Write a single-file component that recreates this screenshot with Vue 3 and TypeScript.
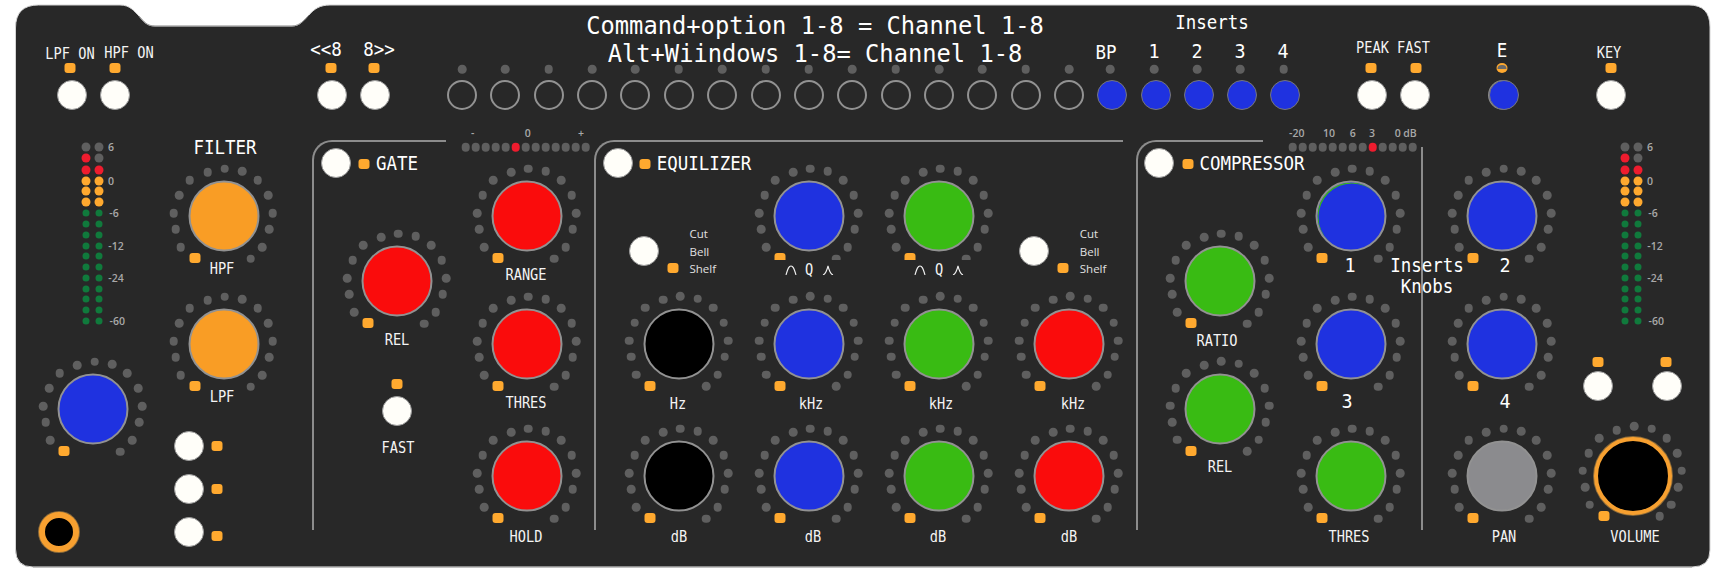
<script setup lang="ts">
interface Knob { x: number; y: number; color: string; big?: boolean; fringe?: boolean }
interface Label { x: number; y: number; text: string; size: string }
interface Pt { x: number; y: number }

const ringDots: [number, number][] = [
  [1.4, -47.3], [18.9, -45], [34, -35.7], [44.6, -20.7], [49, -3], [45.6, 13.3], [38.6, 31], [27, 42.7],
  [-16, -43.7], [-33.7, -35.7], [-44.2, -20.7], [-50, -3], [-47.7, 13.3], [-43, 31],
]

const blue = 'blue', green = 'green', red = 'red', orange = 'orange', black = 'black', gray = 'gray'

const knobs: Knob[] = [
  { x: 223.5, y: 216, color: orange }, { x: 223.5, y: 344, color: orange },
  { x: 93.4, y: 409, color: blue },
  { x: 397, y: 281, color: red },
  { x: 527, y: 216, color: red }, { x: 527, y: 344, color: red }, { x: 527, y: 476, color: red },
  { x: 809, y: 216, color: blue }, { x: 939, y: 216, color: green },
  { x: 679, y: 343.5, color: black }, { x: 809, y: 343.5, color: blue }, { x: 939, y: 343.5, color: green }, { x: 1069, y: 343.5, color: red },
  { x: 679, y: 476, color: black }, { x: 809, y: 476, color: blue }, { x: 939, y: 476, color: green }, { x: 1069, y: 476, color: red },
  { x: 1220, y: 281, color: green }, { x: 1220, y: 408.7, color: green },
  { x: 1351, y: 216, color: blue, fringe: true }, { x: 1502.4, y: 216, color: blue },
  { x: 1351, y: 344, color: blue }, { x: 1502.4, y: 344, color: blue },
  { x: 1351, y: 476, color: green }, { x: 1502.4, y: 476, color: gray },
  { x: 1632.7, y: 475.7, color: black, big: true },
]

const whiteButtons: Pt[] = [
  { x: 71.6, y: 95 }, { x: 114.8, y: 95 }, { x: 331.8, y: 95 }, { x: 375, y: 95 },
  { x: 1372, y: 95 }, { x: 1415, y: 95 }, { x: 1610.6, y: 95 },
  { x: 336, y: 163.3 }, { x: 618, y: 163.3 }, { x: 1159.3, y: 163.3 },
  { x: 644, y: 250.7 }, { x: 1034, y: 250.7 }, { x: 396.5, y: 411.3 },
  { x: 188.7, y: 445.7 }, { x: 188.7, y: 489.3 }, { x: 188.7, y: 532.3 },
  { x: 1597.6, y: 385.7 }, { x: 1667, y: 385.7 },
]

const ringXs = Array.from({ length: 15 }, (_, i) => 462 + i * 43.36)
const blueButtons: Pt[] = [
  { x: 1112, y: 95 }, { x: 1156, y: 95 }, { x: 1198.5, y: 95 }, { x: 1242, y: 95 }, { x: 1285, y: 95 }, { x: 1504, y: 95 },
]
const topDots = [...ringXs, 1110, 1154.4, 1197.4, 1240.4, 1283.5]

const leds: Pt[] = [
  { x: 70, y: 68 }, { x: 114.8, y: 68 }, { x: 330.6, y: 68 }, { x: 374, y: 68 },
  { x: 1370.7, y: 68 }, { x: 1416, y: 68 }, { x: 1611, y: 68 },
  { x: 364, y: 164.3 }, { x: 645.4, y: 164.3 }, { x: 1188, y: 163.7 },
  { x: 672.6, y: 268.3 }, { x: 1063, y: 268.3 }, { x: 397, y: 384.3 },
  { x: 217, y: 446.3 }, { x: 217, y: 489.3 }, { x: 217, y: 536.3 },
  { x: 1598, y: 362.3 }, { x: 1666, y: 362.3 },
]

const labels: Label[] = [
  { x: 814.7, y: 24.5, text: 'Command+option 1-8 = Channel 1-8', size: 'title' },
  { x: 814.7, y: 52.7, text: 'Alt+Wiindows 1-8= Channel 1-8', size: 'title' },
  { x: 1211.5, y: 21.7, text: 'Inserts', size: 'head' },
  { x: 1106, y: 51.7, text: 'BP', size: 'head' },
  { x: 1154, y: 51, text: '1', size: 'digit' }, { x: 1197.4, y: 51, text: '2', size: 'digit' },
  { x: 1240, y: 51, text: '3', size: 'digit' }, { x: 1283, y: 51, text: '4', size: 'digit' },
  { x: 1393, y: 46.7, text: 'PEAK FAST', size: 'sm' },
  { x: 1502, y: 50, text: 'E', size: 'head' },
  { x: 1608.7, y: 51.7, text: 'KEY', size: 'sm' },
  { x: 70, y: 52.7, text: 'LPF ON', size: 'sm' }, { x: 128.8, y: 51.7, text: 'HPF ON', size: 'sm' },
  { x: 326, y: 49.3, text: '<<8', size: 'head' }, { x: 379, y: 49.3, text: '8>>', size: 'head' },
  { x: 225, y: 146.7, text: 'FILTER', size: 'head' },
  { x: 221.6, y: 267.7, text: 'HPF', size: 'sm' }, { x: 221.6, y: 395.7, text: 'LPF', size: 'sm' },
  { x: 396.5, y: 163.3, text: 'GATE', size: 'head' },
  { x: 525.5, y: 274.3, text: 'RANGE', size: 'sm' }, { x: 397.2, y: 339, text: 'REL', size: 'sm' },
  { x: 525.8, y: 401.7, text: 'THRES', size: 'sm' }, { x: 398, y: 446.7, text: 'FAST', size: 'sm' },
  { x: 525.8, y: 536, text: 'HOLD', size: 'sm' },
  { x: 704, y: 163.3, text: 'EQUILIZER', size: 'head' },
  { x: 678, y: 402.7, text: 'Hz', size: 'sm' }, { x: 810.5, y: 402.7, text: 'kHz', size: 'sm' },
  { x: 941.3, y: 402.7, text: 'kHz', size: 'sm' }, { x: 1072.5, y: 402.7, text: 'kHz', size: 'sm' },
  { x: 678.6, y: 535.7, text: 'dB', size: 'sm' }, { x: 812.6, y: 535.7, text: 'dB', size: 'sm' },
  { x: 937.8, y: 535.7, text: 'dB', size: 'sm' }, { x: 1068.6, y: 535.7, text: 'dB', size: 'sm' },
  { x: 1251.5, y: 163.3, text: 'COMPRESSOR', size: 'head' },
  { x: 1217, y: 340, text: 'RATIO', size: 'sm' }, { x: 1220, y: 465.7, text: 'REL', size: 'sm' },
  { x: 1350, y: 265, text: '1', size: 'digit' }, { x: 1505, y: 265, text: '2', size: 'digit' },
  { x: 1347, y: 401, text: '3', size: 'digit' }, { x: 1505, y: 401, text: '4', size: 'digit' },
  { x: 1427.4, y: 265, text: 'Inserts', size: 'head' }, { x: 1427, y: 286, text: 'Knobs', size: 'head' },
  { x: 1349, y: 536, text: 'THRES', size: 'sm' }, { x: 1504, y: 536, text: 'PAN', size: 'sm' },
  { x: 1634.6, y: 536, text: 'VOLUME', size: 'sm' },
  { x: 472.6, y: 133, text: '-', size: 'scale' }, { x: 527.7, y: 133, text: '0', size: 'scale' }, { x: 581, y: 133, text: '+', size: 'scale' },
  { x: 1296.8, y: 133, text: '-20', size: 'scale' }, { x: 1329, y: 133, text: '10', size: 'scale' },
  { x: 1352.8, y: 133, text: '6', size: 'scale' }, { x: 1372, y: 133, text: '3', size: 'scale' },
  { x: 1397.7, y: 133, text: '0', size: 'scale' }, { x: 1410, y: 133, text: 'dB', size: 'scale' },
]

const eqModes = [689.5, 1079.8]
const eqModeRows = [{ y: 234.3, text: 'Cut' }, { y: 251.7, text: 'Bell' }, { y: 268.7, text: 'Shelf' }]

const frames = [
  { left: 312, width: 134 },
  { left: 594, width: 529 },
  { left: 1135.7, width: 127 },
]

const meterRows = [146.7, 157.7, 169.7, 180.7, 191.3, 202, 213, 223.7, 234.7, 245.7, 256.3, 267, 277.7, 288.7, 299.3, 310.3, 321]
const meterOffsets = [0, 1539]
const meterScale = [
  { x: 111, y: 147, text: '6' }, { x: 111, y: 181, text: '0' }, { x: 114, y: 213, text: '-6' },
  { x: 116, y: 246, text: '-12' }, { x: 116, y: 278.3, text: '-24' }, { x: 117.3, y: 321, text: '-60' },
]

function meterClass(row: number, col: number): string {
  if (row === 0 || (row === 1 && col === 1)) return 'off'
  if (row <= 2) return 'hot'
  if (row <= 5) return 'warn'
  return 'ok'
}

const strips = [
  { start: 465.7, red: 5 },
  { start: 1292.6, red: 8 },
]

const qRows = [
  { left: 790.5, q: 809, right: 827.6 },
  { left: 920, q: 939, right: 957.7 },
]

function at(x: number, y: number) {
  return { left: x + 'px', top: y + 'px' }
}
</script>

<template>
  <div class="panel">
    <svg class="shell" width="1727" height="585" viewBox="0 0 1727 585">
      <path
        d="M38.5 5H120C130 5 134 11 139 16C144 22 147 26 155 26H292C300 26 304 20 309 15C314 9 320 5 330 5H1689Q1710 5 1710 27V550Q1710 567 1692 567H33Q15.5 567 15.5 549V28Q15.5 5 38.5 5Z"
        fill="#282828"
        stroke="#d4d4d4"
        stroke-width="1"
      />
      <path d="M33 567H1692" fill="none" stroke="#9a9a9a" stroke-width="1" />
      <path d="M139 16C144 22 147 26 155 26H292C300 26 304 20 309 15" fill="none" stroke="#9a9a9a" stroke-width="1" />
    </svg>

    <div v-for="f in frames" :key="f.left" class="frame" :style="{ left: f.left + 'px', width: f.width + 'px' }"></div>
    <div class="divider"></div>

    <template v-for="k in knobs" :key="k.x + '-' + k.y">
      <span
        v-for="(d, i) in ringDots"
        :key="i"
        class="dot"
        :style="at(k.x + d[0], k.y + d[1] - (k.big ? 2 : 0))"
      ></span>
      <div class="knob" :class="[k.color, { big: k.big, fringe: k.fringe }]" :style="at(k.x, k.y)"></div>
      <span class="led" :style="at(k.x - 29, k.y + (k.big ? 40 : 42))"></span>
    </template>

    <!-- the Q captions sit on a strip that trims the knob LEDs -->
    <template v-for="q in qRows" :key="q.q">
      <div class="q-strip" :style="at(q.q, 270)"></div>
      <svg class="q-curve" width="12" height="10" viewBox="0 0 12 10" :style="at(q.left, 269.5)">
        <path d="M1 10C3 3 4 1 6 1C8 1 9 3 11 10" />
      </svg>
      <span class="label sm" :style="at(q.q, 269.3)">Q</span>
      <svg class="q-curve" width="12" height="10" viewBox="0 0 12 10" :style="at(q.right, 269.5)">
        <path d="M1 10C4 9 5 5 6 1C7 5 8 9 11 10" />
      </svg>
    </template>

    <div v-for="b in whiteButtons" :key="b.x + '-' + b.y" class="btn white" :style="at(b.x, b.y)"></div>
    <div v-for="x in ringXs" :key="x" class="btn hollow" :style="at(x, 95)"></div>
    <div
      v-for="b in blueButtons"
      :key="b.x"
      class="btn blue-btn"
      :class="{ crescent: b.x === 1504 }"
      :style="at(b.x, b.y)"
    ></div>
    <span v-for="x in topDots" :key="x" class="dot" :style="at(x, 69)"></span>
    <span v-for="l in leds" :key="l.x + '-' + l.y" class="led" :style="at(l.x, l.y)"></span>
    <span class="led round half" :style="at(1502, 68)"></span>

    <template v-for="s in strips" :key="s.start">
      <span
        v-for="i in 13"
        :key="i"
        class="dot"
        :class="{ peak: i - 1 === s.red }"
        :style="at(s.start + (i - 1) * 10, 147.3)"
      ></span>
    </template>

    <template v-for="off in meterOffsets" :key="off">
      <template v-for="(y, row) in meterRows" :key="y">
        <span class="meter" :class="meterClass(row, 0)" :style="at(86 + off, y)"></span>
        <span class="meter" :class="meterClass(row, 1)" :style="at(99.3 + off, y)"></span>
      </template>
      <span v-for="m in meterScale" :key="m.text" class="label scale" :style="at(m.x + off, m.y)">{{ m.text }}</span>
    </template>

    <div class="jack" :style="at(58.5, 532)"></div>

    <span v-for="l in labels" :key="l.x + l.text + l.y" class="label" :class="l.size" :style="at(l.x, l.y)">{{ l.text }}</span>

    <template v-for="x in eqModes" :key="x">
      <span v-for="r in eqModeRows" :key="r.text" class="mode" :style="at(x, r.y)">{{ r.text }}</span>
    </template>
  </div>
</template>

<style scoped>
.panel {
  position: relative;
  width: 1727px;
  height: 585px;
  overflow: hidden;
  background: #fff;
}

.shell {
  position: absolute;
  left: 0;
  top: 0;
}

.frame {
  position: absolute;
  top: 140px;
  height: 390px;
  box-sizing: border-box;
  border-top: 2px solid #8c8c8c;
  border-left: 2px solid #8c8c8c;
  border-top-left-radius: 20px;
}

.divider {
  position: absolute;
  left: 1421px;
  top: 147px;
  width: 2px;
  height: 383px;
  background: #8c8c8c;
}

.dot,
.knob,
.led,
.btn,
.meter,
.jack,
.label,
.q-strip,
.q-curve {
  position: absolute;
  transform: translate(-50%, -50%);
}

.dot {
  width: 8.6px;
  height: 8.6px;
  border-radius: 50%;
  background: #5f5f5f;
}

.dot.peak {
  background: #ee1c2e;
}

.knob {
  width: 71px;
  height: 71px;
  box-sizing: border-box;
  border: 2px solid #929292;
  border-radius: 50%;
}

.knob.big {
  width: 78px;
  height: 78px;
  border: 4px solid #f7a030;
  box-shadow: 0 0 0 1px #8a6a3a;
}

.knob.fringe {
  box-shadow: inset 1px 1px 0 #39bb13;
}

.blue { background: #1f32e0; }
.green { background: #39bb13; }
.red { background: #fa0c0c; }
.orange { background: #f99d25; }
.black { background: #000; }
.gray { background: #8b8b8e; }

.led {
  width: 11px;
  height: 10px;
  border-radius: 3px;
  background: #ffa92f;
}

.led.round {
  border-radius: 50%;
}

.led.half::after {
  content: '';
  position: absolute;
  left: 1px;
  top: 2px;
  width: 9px;
  height: 4px;
  border-radius: 5px 5px 0 0;
  background: #6a6a6a;
}

.btn {
  width: 30px;
  height: 30px;
  box-sizing: border-box;
  border-radius: 50%;
}

.btn.white {
  background: #fffef9;
  border: 1px solid #9a9a9a;
}

.btn.hollow {
  border: 2px solid #929292;
}

.btn.blue-btn {
  background: #1f32e0;
  border: 1px solid #777;
}

.btn.crescent {
  box-shadow: -1px 0 0 #8a8a8a;
}

.meter {
  width: 9px;
  height: 9px;
  border-radius: 50%;
}

.meter.off { background: #5f5f5f; }
.meter.hot { background: #ee1c2e; }
.meter.warn { background: #ffa92f; }
.meter.ok { width: 7px; height: 7px; background: #107a3c; }

.jack {
  width: 40px;
  height: 40px;
  box-sizing: border-box;
  border: 6px solid #f7a030;
  border-radius: 50%;
  background: #000;
  box-shadow: 0 0 0 1px #8a6a3a;
}

.label {
  font-family: "DejaVu Sans Mono", monospace;
  color: #fff;
  white-space: pre;
  line-height: 1;
}

/* the panel lettering is narrower than DejaVu Mono at this height */
.title { font-size: 25px; transform: translate(-50%, -50%) scaleX(0.95); }
.digit { font-size: 20px; transform: translate(-50%, -50%) scaleX(0.92); }
.head { font-size: 19px; transform: translate(-50%, -50%) scaleX(0.92); }
.sm { font-size: 15.5px; color: #f4f4f4; transform: translate(-50%, -40%) scaleX(0.88); }

.label.scale {
  font-family: "Open Sans", sans-serif;
  font-size: 10.5px;
  font-weight: 600;
  color: #a8a8a8;
}

.mode {
  position: absolute;
  transform: translateY(-50%);
  font-family: "Open Sans", sans-serif;
  font-size: 11.5px;
  line-height: 1;
  color: #e0e0e0;
}

.q-strip {
  width: 84px;
  height: 20px;
  background: #282828;
}

.q-curve {
  fill: none;
  stroke: #f2f2f2;
  stroke-width: 1.1;
}
</style>

<style>
body {
  margin: 0;
  background: #fff;
}
</style>
